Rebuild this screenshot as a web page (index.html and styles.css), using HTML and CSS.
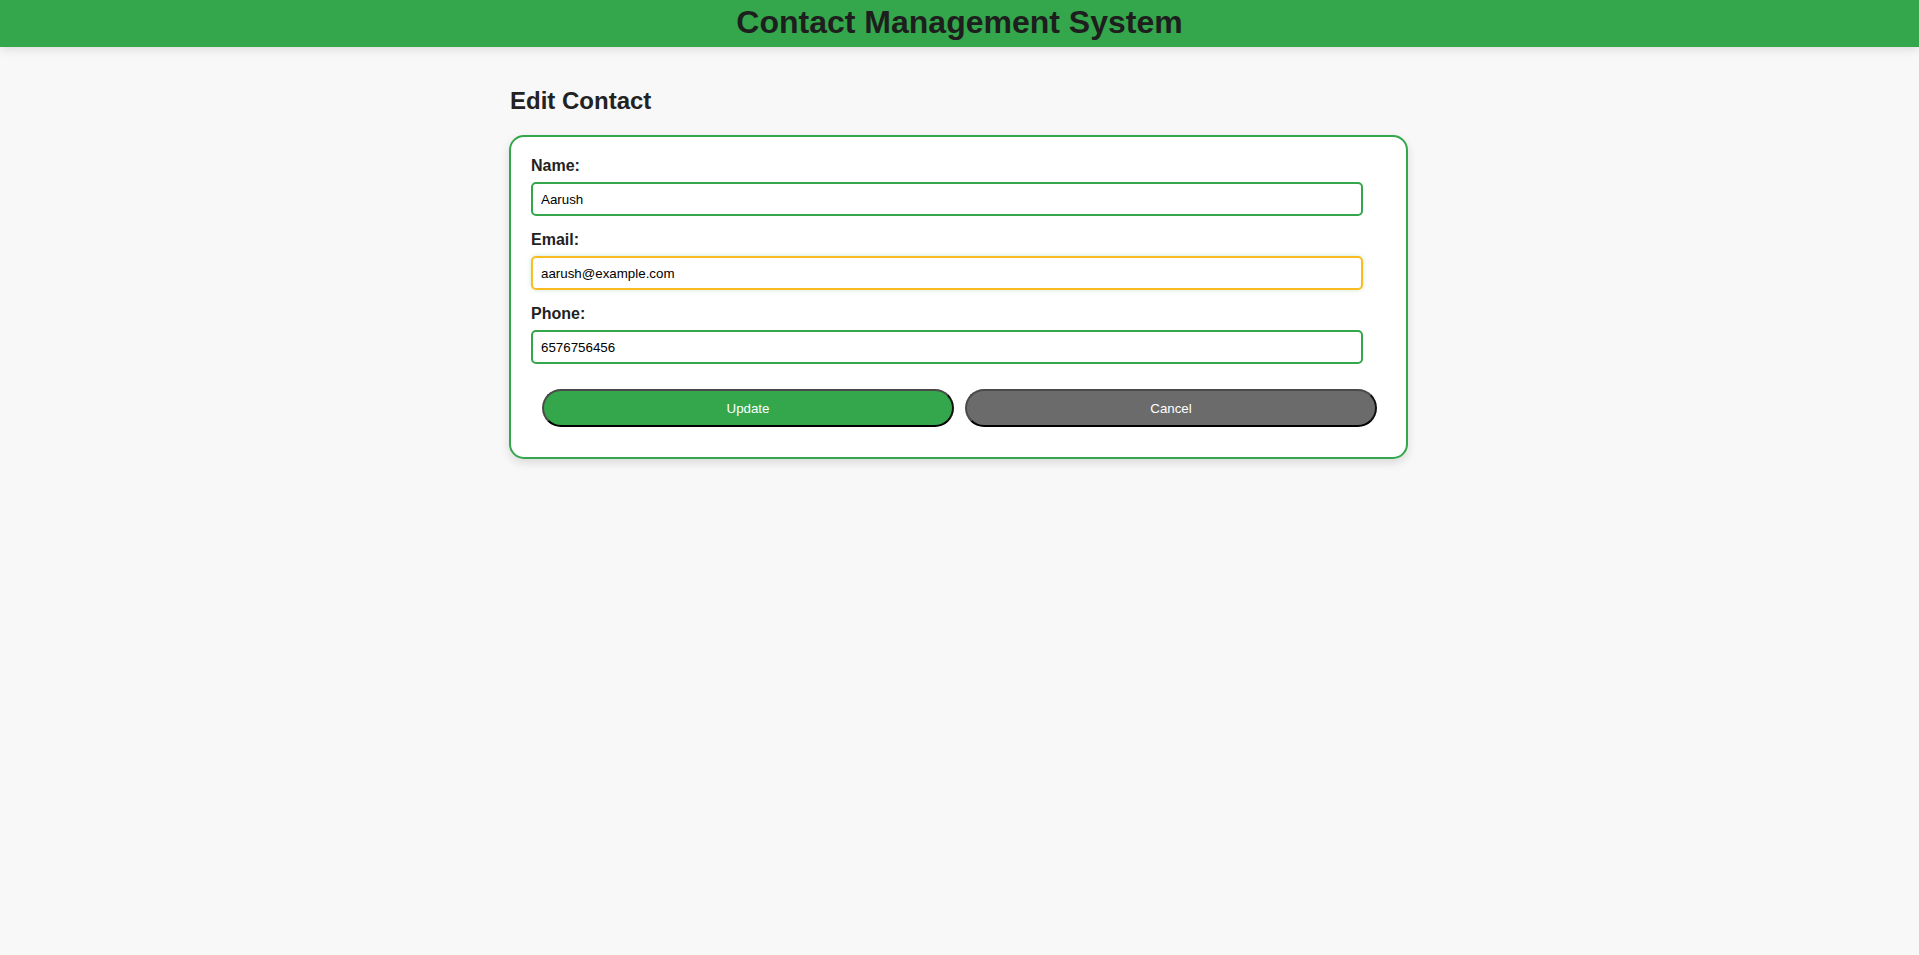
FILE: index.html
```html
<!DOCTYPE html>
<html lang="en">
<head>
<meta charset="utf-8">
<title>Contact Management System</title>
<link rel="stylesheet" href="styles.css">
</head>
<body>
<header class="topbar">
  <h1 class="title">Contact Management System</h1>
</header>
<main class="container">
  <h2 class="page-title">Edit Contact</h2>
  <form class="card">
    <label class="field-label" for="name">Name:</label>
    <input class="field-input" id="name" type="text" value="Aarush">
    <label class="field-label" for="email">Email:</label>
    <input class="field-input is-focused" id="email" type="email" value="aarush@example.com">
    <label class="field-label" for="phone">Phone:</label>
    <input class="field-input" id="phone" type="text" value="6576756456">
    <div class="actions">
      <button type="button" class="btn btn-update">Update</button>
      <button type="button" class="btn btn-cancel">Cancel</button>
    </div>
  </form>
</main>
</body>
</html>
```

FILE: styles.css
```css
* { box-sizing: border-box; }

html, body {
  margin: 0;
  padding: 0;
}

body {
  background: #f8f8f8;
  font-family: "Liberation Sans", Arial, Helvetica, sans-serif;
  color: #222;
  min-height: 955px;
}

.topbar {
  background: #34a64b;
  height: 47px;
  display: flex;
  align-items: center;
  justify-content: center;
  box-shadow: 0 2px 10px rgba(0, 0, 0, 0.12);
}

.title {
  margin: 0;
  font-size: 32px;
  font-weight: bold;
  color: #1e1e1e;
  line-height: 37px;
  position: relative;
  top: -1px;
}

.container {
  width: 901px;
  margin: 0 auto;
  padding-top: 20px;
}

.page-title {
  margin: 20px 0 20px 1px;
  font-size: 24px;
  font-weight: bold;
  color: #222;
  line-height: 28px;
}

.card {
  background: #fff;
  border: 2px solid #34a64b;
  border-radius: 15px;
  padding: 20px 20px 20px 20px;
  box-shadow: 0 4px 10px rgba(0, 0, 0, 0.12);
  width: 899px;
}

.field-label {
  display: block;
  font-size: 16px;
  font-weight: bold;
  line-height: 18px;
  color: #222;
  margin-bottom: 7px;
}

.field-input {
  display: block;
  width: 832px;
  height: 34px;
  margin: 0 0 15px 0;
  padding: 0 8px;
  border: 2px solid #34a64b;
  border-radius: 5px;
  font-family: "Liberation Sans", Arial, Helvetica, sans-serif;
  font-size: 13.333px;
  color: #000;
  background: #fff;
  outline: none;
}

.field-input.is-focused {
  border-color: #fbbc23;
  box-shadow: 0 0 4px rgba(52, 166, 75, 0.25);
}

.actions {
  display: flex;
  gap: 11px;
  margin: 25px 9px 10px 11px;
}

.btn {
  flex: 1;
  height: 38px;
  border-radius: 20px;
  border-style: solid;
  border-width: 2px;
  border-color: #4a4a4a #111 #000 #4a4a4a;
  color: #fff;
  font-family: "Liberation Sans", Arial, Helvetica, sans-serif;
  font-size: 13.333px;
  cursor: pointer;
}

.btn-update { background: #34a64b; }
.btn-cancel { background: #6b6b6b; }
```
